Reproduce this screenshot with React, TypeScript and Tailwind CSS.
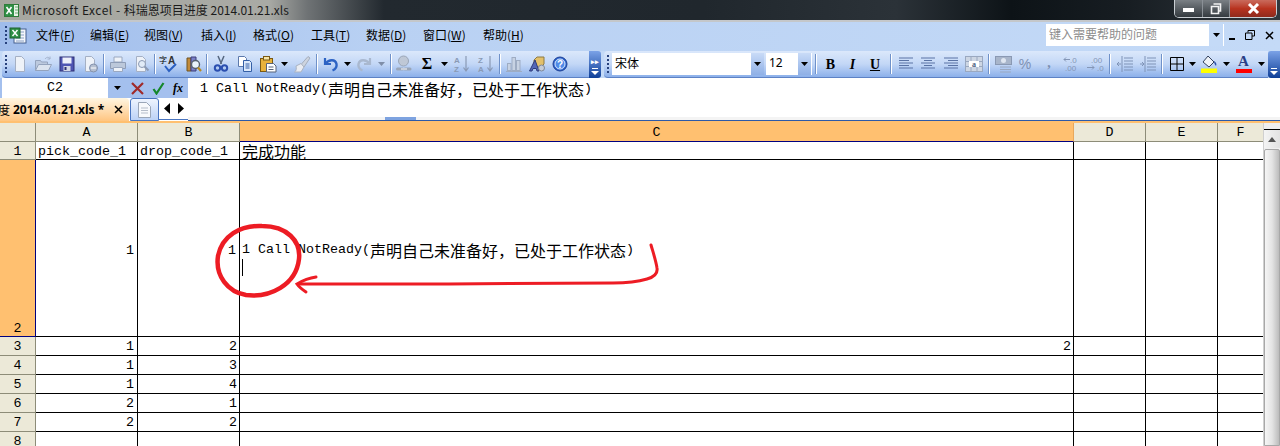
import React from "react";

const MONO = "font-['Liberation_Mono','Noto_Sans_CJK_SC',monospace]";
const UI = "font-['Noto_Sans_CJK_SC','Noto_Sans',sans-serif]";

const S = ({ c, children }: { c: string; children?: React.ReactNode }) => (
  <div className={`flex-none h-full flex items-center justify-center ${c}`}>{children}</div>
);
const Sep = ({ c }: { c: string }) => (
  <S c={c}>
    <div className="w-px h-[20px] bg-[#6f91c9] border-r border-white box-content" />
  </S>
);
const Ico = ({ children, s = 18 }: { children: React.ReactNode; s?: number }) => (
  <svg width={s} height={s} viewBox="0 0 18 18">{children}</svg>
);
const Drop = ({ dim }: { dim?: boolean }) => (
  <svg width="7" height="4" viewBox="0 0 7 4"><path d="M0 0h7L3.5 4z" fill={dim ? "#7f8ea8" : "#000"} /></svg>
);
const Grip = () => (
  <div className="flex flex-col gap-[2px]">
    {[0, 1, 2, 3, 4].map((i) => <div key={i} className="w-[2px] h-[2px] bg-[#27417c]" />)}
  </div>
);
const Chev = ({ c, top }: { c: string; top?: boolean }) => (
  <div className={`flex-none flex flex-col items-center justify-end pb-[3px] gap-[3px] bg-gradient-to-b from-[#7ba2e7] to-[#0e3f98] ${c}`}>
    {top && <div className="text-white text-[7px] leading-[7px] font-bold">▸▸</div>}
    <svg width="8" height="7" viewBox="0 0 8 7"><path d="M1 0h6v1H1zM0 3h8L4 7z" fill="#fff" /></svg>
  </div>
);
const MenuItem = ({ c, t, k }: { c: string; t: string; k: string }) => (
  <div className={`flex-none text-[12px] text-black pb-[3px] ${UI} ${c}`}>{t}(<u>{k}</u>)</div>
);

const TitleBar = () => (
  <div className="h-[22px] flex-none flex items-start border-b-2 border-[#c4c7ca] bg-[linear-gradient(90deg,#a6a79f_0%,#a9aaa5_21%,#6f7375_24%,#22292f_30%,#20272d_55%,#2b3238_70%,#0d1317_79%,#171d22_88%,#31383e_100%)]">
    <div className="w-[22px] h-[20px] flex items-center justify-center flex-none">
      <svg width="15" height="15" viewBox="0 0 15 15">
        <rect x="0.5" y="1.5" width="14" height="12" fill="#e8f3e6" stroke="#2f7d3a" />
        <rect x="1" y="2" width="9" height="11" fill="#2f8f45" />
        <path d="M2.5 4l5 7M7.5 4l-5 7" stroke="#fff" strokeWidth="1.6" />
        <path d="M11 4h3M11 7h3M11 10h3" stroke="#6aa873" />
      </svg>
    </div>
    <div className={`h-[20px] flex items-center text-[12px] text-[#1b1b1b] whitespace-pre ${UI}`}><span className="tracking-[0.5px]">Microsoft Excel - </span>科瑞恩项目进度 2014.01.21.xls</div>
    <div className="ml-auto mr-[3px] h-[18px] w-[103px] flex rounded-b-[5px] border border-t-0 border-[#c9ced3] overflow-hidden">
      <div className="w-[28px] border-r border-[#8a9096] bg-gradient-to-b from-[#7a8085] to-[#353b40] flex items-center justify-center">
        <div className="w-[11px] h-[4px] bg-white mt-[3px]" />
      </div>
      <div className="w-[27px] border-r border-[#8a9096] bg-gradient-to-b from-[#7a8085] to-[#353b40] flex items-center justify-center">
        <svg width="12" height="12" viewBox="0 0 12 12"><path d="M3.5 1h7v7h-2M1.5 3.5h7v7h-7z" fill="none" stroke="#f2f2f2" strokeWidth="1.6" /></svg>
      </div>
      <div className="flex-1 bg-gradient-to-b from-[#c96a5c] via-[#b8331f] to-[#8f2a1c] flex items-center justify-center">
        <svg width="13" height="11" viewBox="0 0 13 11"><path d="M2 1l9 9M11 1l-9 9" stroke="#fff" strokeWidth="3" /></svg>
      </div>
    </div>
  </div>
);

const MenuBar = () => (
  <div className="h-[29px] flex-none flex items-center bg-[linear-gradient(90deg,#9fbceb_0%,#b9d1f3_30%,#c4daf7_100%)]">
    <div className="w-[36px] flex-none flex items-center pl-[5px] pb-[3px] gap-[2px] h-full">
      <Grip />
      <svg width="18" height="17" viewBox="0 0 18 17">
        <rect x="5" y="2" width="12" height="14" fill="#f4f7fb" stroke="#46608f" />
        <path d="M7 5h8M7 8h8M7 11h8M7 14h8" stroke="#8aa1c6" />
        <rect x="1" y="1" width="10" height="10" fill="#2f8f45" stroke="#1d6330" />
        <path d="M3.5 3l5 6M8.5 3l-5 6" stroke="#fff" strokeWidth="1.4" />
      </svg>
    </div>
    <MenuItem c="w-[54px]" t="文件" k="F" />
    <MenuItem c="w-[54px]" t="编辑" k="E" />
    <MenuItem c="w-[57px]" t="视图" k="V" />
    <MenuItem c="w-[52px]" t="插入" k="I" />
    <MenuItem c="w-[58px]" t="格式" k="O" />
    <MenuItem c="w-[55px]" t="工具" k="T" />
    <MenuItem c="w-[57px]" t="数据" k="D" />
    <MenuItem c="w-[60px]" t="窗口" k="W" />
    <MenuItem c="w-[50px]" t="帮助" k="H" />
    <div className="ml-auto w-[178px] h-[22px] mb-[3px] flex bg-white">
      <div className={`flex-1 pl-[3px] pb-[2px] flex items-center text-[12px] text-[#8d8d8d] ${UI}`}>键入需要帮助的问题</div>
      <div className="w-[14px] bg-[#c4daf7] flex items-center justify-center"><Drop /></div>
      <div className="w-px" />
    </div>
    <S c="w-[16px]"><div className="w-[6px] h-[2px] bg-black mt-[4px]" /></S>
    <S c="w-[19px] pb-[3px]">
      <svg width="10" height="10" viewBox="0 0 10 10"><path d="M3 2.5V.5h6.5V6H7M.5 3H7v6.500H.5z" fill="none" stroke="#000" /></svg>
    </S>
    <S c="w-[20px] pb-[3px]">
      <svg width="9" height="9" viewBox="0 0 9 9"><path d="M1 1l7 7M8 1L1 8" stroke="#000" strokeWidth="1.5" /></svg>
    </S>
    <div className="w-px" />
  </div>
);

const Doc = () => <path d="M4.5 1.500h6l3 3v12h-9z" fill="#eef2f8" stroke="#a5b0c4" />;

const ToolbarA = () => (
  <div className="w-[587px] flex-none h-full flex items-center rounded-l-[4px] pl-0">
    <S c="w-[7px]"><Grip /></S>
    <S c="w-[22px]"><Ico><Doc /></Ico></S>
    <S c="w-[24px]"><Ico><path d="M1.500 15.500v-10h5l1 1.500h6v8.500z" fill="#bcc9de" stroke="#94a3bd" /><path d="M1.500 15.500l3-6h13l-3 6z" fill="#dbe3ef" stroke="#94a3bd" /><path d="M11 4c2-2.500 4-2 5 0M16 1.500V4h-2.500" fill="none" stroke="#a3b2cc" /></Ico></S>
    <S c="w-[23px]"><Ico><rect x="2" y="2" width="14" height="14" fill="#4f55b3" stroke="#2f3174" /><rect x="4.5" y="2.5" width="9" height="6" fill="#eef0fa" /><rect x="5.5" y="11" width="7" height="5" fill="#d5d8e6" /><rect x="6.5" y="12" width="2" height="3" fill="#2f3174" /></Ico></S>
    <S c="w-[24px]"><Ico><Doc /><circle cx="12.5" cy="13" r="4" fill="#b5bfd0" stroke="#8291ad" /><path d="M10 13h5" stroke="#fff" /></Ico></S>
    <Sep c="w-[4px]" />
    <S c="w-[23px]"><Ico><path d="M5 2h8v5H5z" fill="#eef2f8" stroke="#9aa8c0" /><path d="M1.500 7.500h15v6h-15z" fill="#bcc8da" stroke="#8e9db7" /><path d="M4.500 12.500h9v4h-9z" fill="#eef2f8" stroke="#9aa8c0" /></Ico></S>
    <S c="w-[24px]"><Ico><Doc /><circle cx="10" cy="9" r="3.5" fill="#e1ebf7" stroke="#8b9ab4" /><path d="M12.500 11.500l4 4" stroke="#8b9ab4" strokeWidth="2" /></Ico></S>
    <Sep c="w-[4px]" />
    <S c="w-[23px]"><svg width="20" height="18" viewBox="0 0 20 18"><text x="0" y="8" fontSize="8" fill="#000" fontFamily="Noto Sans CJK SC">字</text><text x="9" y="9" fontSize="10" fontWeight="700" fill="#333" fontFamily="Liberation Sans">A</text><path d="M6 11l4 5 7-7" fill="none" stroke="#2a5fc1" strokeWidth="2" /></svg></S>
    <S c="w-[25px]"><Ico><path d="M3 3h4v13H3z" fill="#c28a3a" stroke="#6e5220" /><path d="M7 2h5v14H7z" fill="#7a80c8" stroke="#3c3f7a" /><circle cx="11.5" cy="9.5" r="4" fill="#e9f3fb" stroke="#55606e" strokeWidth="1.4" /><path d="M14 12.500l3 3.500" stroke="#b98a1c" strokeWidth="2.2" /></Ico></S>
    <Sep c="w-[4px]" />
    <S c="w-[24px]"><Ico><path d="M6 1l3.500 8M12 1L8.500 9" stroke="#56677f" strokeWidth="1.5" /><circle cx="5.5" cy="13" r="2.7" fill="none" stroke="#2b4fb0" strokeWidth="2" /><circle cx="12.5" cy="13" r="2.7" fill="none" stroke="#2b4fb0" strokeWidth="2" /></Ico></S>
    <S c="w-[24px]"><Ico><path d="M2.500 1.500h6l2 2v8h-8z" fill="#fff" stroke="#5c79ac" /><path d="M7.500 5.500h6l2 2v9h-8z" fill="#dce9fb" stroke="#345fa6" /><path d="M9.500 9h4M9.500 11h4M9.500 13h4" stroke="#345fa6" /></Ico></S>
    <S c="w-[22px]"><Ico><rect x="1.5" y="3.5" width="12" height="13" fill="#e8b23c" stroke="#7a5a14" /><rect x="4.5" y="1.5" width="6" height="3.5" fill="#f7e6a6" stroke="#7a5a14" /><path d="M7.500 8.500h7l2.500 2.500v6h-9.500z" fill="#fff" stroke="#56627a" /><path d="M9.500 12h5M9.500 14.500h5" stroke="#56627a" /></Ico></S>
    <S c="w-[11px]"><Drop /></S>
    <S c="w-[24px]"><Ico><path d="M8 9.500l7-8 2 1.500-6 9z" fill="#cdd4df" stroke="#a4aebe" /><path d="M3 11l5-2.500 3 3.500-3 5H1.500c2-1 2-3.500 1.500-6z" fill="#e9ecf2" stroke="#aab3c2" /></Ico></S>
    <Sep c="w-[5px]" />
    <S c="w-[24px]"><Ico><path d="M3 3v6h6" fill="none" stroke="#2d63c4" strokeWidth="2.2" /><path d="M3.500 8.500C7 4 13.500 4 14.500 9c.5 3-1.500 5.500-4 6.500" fill="none" stroke="#2d63c4" strokeWidth="2.4" /></Ico></S>
    <S c="w-[9px]"><Drop /></S>
    <S c="w-[24px]"><Ico><path d="M15 3v6H9" fill="none" stroke="#a9b8cf" strokeWidth="2.2" /><path d="M14.500 8.500C11 4 4.500 4 3.500 9c-.5 3 1.500 5.500 4 6.500" fill="none" stroke="#a9b8cf" strokeWidth="2.4" /></Ico></S>
    <S c="w-[11px]"><Drop dim /></S>
    <Sep c="w-[7px]" />
    <S c="w-[20px]"><Ico><circle cx="8.5" cy="6" r="5" fill="#bfc8d6" stroke="#9aa6b8" /><path d="M2.500 14h5M10 14h5" stroke="#9aa6b8" strokeWidth="3" strokeLinecap="round" fill="none" /><path d="M6 14h6" stroke="#d8dde6" strokeWidth="1.5" /></Ico></S>
    <S c="w-[26px]"><span className="text-[16px] font-bold text-black font-['Liberation_Serif',serif] leading-none">Σ</span></S>
    <S c="w-[9px]"><Drop /></S>
    <S c="w-[25px]"><svg width="18" height="18" viewBox="0 0 18 18"><text x="1" y="8" fontSize="8" fill="#8a9ab5" fontWeight="700" fontFamily="Liberation Sans">A</text><text x="1" y="16.5" fontSize="8" fill="#8a9ab5" fontWeight="700" fontFamily="Liberation Sans">Z</text><path d="M13 1v14M10.500 12.500l2.500 3.500 2.500-3.500" fill="none" stroke="#8a9ab5" strokeWidth="1.2" /></svg></S>
    <S c="w-[23px]"><svg width="18" height="18" viewBox="0 0 18 18"><text x="1" y="8" fontSize="8" fill="#8a9ab5" fontWeight="700" fontFamily="Liberation Sans">Z</text><text x="1" y="16.5" fontSize="8" fill="#8a9ab5" fontWeight="700" fontFamily="Liberation Sans">A</text><path d="M13 1v14M10.500 12.500l2.500 3.500 2.500-3.500" fill="none" stroke="#8a9ab5" strokeWidth="1.2" /></svg></S>
    <Sep c="w-[6px]" />
    <S c="w-[22px]"><Ico><rect x="2.5" y="8.5" width="3.5" height="7" fill="#c7d2e3" stroke="#9eacc3" /><rect x="7" y="2.5" width="3.5" height="13" fill="#c7d2e3" stroke="#9eacc3" /><rect x="11.5" y="5.5" width="3.5" height="10" fill="#c7d2e3" stroke="#9eacc3" /><path d="M1 16.500h16" stroke="#9eacc3" /></Ico></S>
    <S c="w-[24px]"><Ico><path d="M9 2h7v7l-3 3H6V5z" fill="#e3c06a" stroke="#8d7a45" /><path d="M1.500 16L7 5l4 11H9l-.7-2.500H5L4 16z" fill="#5266b8" stroke="#2e3a7a" /><circle cx="13.5" cy="13" r="3" fill="#c5ccd8" stroke="#7d8798" /></Ico></S>
    <S c="w-[22px]"><svg width="16" height="16" viewBox="0 0 16 16"><circle cx="8" cy="8" r="7" fill="#2e66d0" stroke="#1c3f94" /><circle cx="8" cy="8" r="5" fill="#4f8be8" stroke="#dfeafb" /><text x="8" y="11.5" textAnchor="middle" fontSize="10" fontWeight="700" fill="#fff" fontFamily="Liberation Sans">?</text></svg></S>
    <div className="flex-1" />
  </div>
);

const AlignIcon = ({ kind }: { kind: "l" | "c" | "r" }) => {
  const rows = [0, 1, 2, 3, 4];
  const path = rows
    .map((i) => {
      const short = i % 2 === 1;
      if (kind === "l") return `M2 ${3 + i * 2.5}H${short ? 12 : 16}`;
      if (kind === "r") return `M${short ? 6 : 2} ${3 + i * 2.5}H16`;
      return `M${short ? 5 : 2} ${3 + i * 2.5}H${short ? 13 : 16}`;
    })
    .join("");
  return <Ico><path d={path} stroke="#5a73a5" fill="none" /></Ico>;
};

const ToolbarB = () => (
  <div className="flex-1 h-full flex items-center rounded-l-[4px]">
    <S c="w-[8px]"><Grip /></S>
    <div className="w-[152px] flex-none h-[22px] flex bg-white">
      <div className={`flex-1 pl-[3px] pb-[2px] text-[12px] text-black flex items-center ${UI}`}>宋体</div>
      <div className="w-[13px] bg-gradient-to-b from-[#c9dbf7] to-[#8fb0e6] flex items-center justify-center"><Drop /></div>
    </div>
    <div className="w-[2px] flex-none" />
    <div className="w-[46px] flex-none h-[22px] flex bg-white">
      <div className="flex-1 pl-[3px] pb-[2px] text-[12px] text-black flex items-center font-['Noto_Sans',sans-serif]">12</div>
      <div className="w-[13px] bg-gradient-to-b from-[#c9dbf7] to-[#8fb0e6] flex items-center justify-center"><Drop /></div>
      <div className="w-px" />
    </div>
    <Sep c="w-[8px]" />
    <S c="w-[21px]"><span className="font-['Liberation_Serif',serif] font-bold text-[14px] text-black">B</span></S>
    <S c="w-[23px]"><span className="font-['Liberation_Serif',serif] font-bold italic text-[14px] text-black">I</span></S>
    <S c="w-[22px]"><span className="font-['Liberation_Serif',serif] font-bold underline text-[14px] text-black">U</span></S>
    <Sep c="w-[10px]" />
    <S c="w-[20px]"><AlignIcon kind="l" /></S>
    <S c="w-[24px]"><AlignIcon kind="c" /></S>
    <S c="w-[22px]"><AlignIcon kind="r" /></S>
    <S c="w-[23px]"><svg width="18" height="16" viewBox="0 0 18 16"><rect x="0.5" y="0.5" width="17" height="15" fill="#cdd6e4" stroke="#9aa8c0" /><path d="M.5 5.500h17M.5 10.500h17M6 .5v5M12 .5v5M6 10.500v5M12 10.500v5" stroke="#9aa8c0" /><rect x="4" y="5" width="10" height="6" fill="#fff" /><text x="9" y="10.5" textAnchor="middle" fontSize="8" fontWeight="700" fill="#4d5f80" fontFamily="Liberation Serif">a</text></svg></S>
    <Sep c="w-[8px]" />
    <S c="w-[20px]"><svg width="17" height="17" viewBox="0 0 17 17"><rect x="0.5" y="0.5" width="16" height="8" fill="#a8b5ca" stroke="#8a99b3" /><circle cx="8.5" cy="4.5" r="2.5" fill="#dfe6f0" /><path d="M5 11h11M5 13.500h11M5 16h11" stroke="#9aa8c0" /></svg></S>
    <S c="w-[24px]"><span className="text-[14px] text-[#7d90b2] font-['Liberation_Sans',sans-serif]">%</span></S>
    <S c="w-[24px]"><span className="text-[14px] font-bold text-[#7d90b2] font-['Liberation_Serif',serif] -mt-[4px]">,</span></S>
    <S c="w-[23px]"><svg width="20" height="16" viewBox="0 0 20 16"><text x="7" y="7" fontSize="8" fill="#8496b6" fontFamily="Liberation Sans">.0</text><text x="2" y="15" fontSize="8" fill="#8496b6" fontFamily="Liberation Sans">.00</text><path d="M7 3.500H1M3 1.500l-2 2 2 2" fill="none" stroke="#8496b6" /></svg></S>
    <S c="w-[23px]"><svg width="20" height="16" viewBox="0 0 20 16"><text x="5" y="7" fontSize="8" fill="#8496b6" fontFamily="Liberation Sans">.00</text><text x="11" y="15" fontSize="8" fill="#8496b6" fontFamily="Liberation Sans">.0</text><path d="M1 11.500h7M6 9.500l2 2-2 2" fill="none" stroke="#8496b6" /></svg></S>
    <Sep c="w-[6px]" />
    <S c="w-[23px]"><Ico><path d="M8 3h9M8 6h9M8 9h9M8 12h9M8 15h9M6 1v16" stroke="#7f93b7" fill="none" /><path d="M5 9H1M3 7L1 9l2 2" stroke="#7f93b7" fill="none" /></Ico></S>
    <S c="w-[24px]"><Ico><path d="M8 3h9M8 6h9M8 9h9M8 12h9M8 15h9M6 1v16" stroke="#7f93b7" fill="none" /><path d="M1 9h4M3 7l2 2-2 2" stroke="#7f93b7" fill="none" /></Ico></S>
    <Sep c="w-[4px]" />
    <S c="w-[25px]"><svg width="14" height="14" viewBox="0 0 14 14"><path d="M.5.500h13v13H.5zM7 .5v13M.5 7h13" fill="none" stroke="#000" /></svg></S>
    <S c="w-[7px]"><Drop /></S>
    <S c="w-[27px]">
      <svg width="17" height="18" viewBox="0 0 17 18"><path d="M7 1l6 6-5 5-6-5z" fill="#eef2f8" stroke="#33415c" /><path d="M13 6c2 1 3 3 2 5-1-1-2-3-2-5z" fill="#2a4fa8" /><rect x="0" y="13.5" width="16" height="4.5" fill="#ffff00" /></svg>
    </S>
    <S c="w-[7px]"><Drop /></S>
    <S c="w-[27px]">
      <div className="flex flex-col items-center">
        <span className="text-[15px] leading-[13px] font-bold text-[#2a3f86] font-['Liberation_Serif',serif]">A</span>
        <div className="w-[16px] h-[4px] bg-[#ff0000] mt-[1px]" />
      </div>
    </S>
    <S c="w-[8px]"><Drop /></S>
    <div className="flex-1" />
  </div>
);

const Toolbars = () => (
  <div className="h-[27px] flex-none flex bg-[#c4daf7]">
    <div className="w-[2px] flex-none" />
    <div className="w-[587px] flex-none h-full rounded-l-[4px] border-b border-[#5d82c5] bg-gradient-to-b from-[#dbe8fb] via-[#c3d7f6] to-[#8cb0ea]"><ToolbarA /></div>
    <Chev c="w-[12px] rounded-r-[3px] h-full" top />
    <div className="w-[3px] flex-none" />
    <div className="flex-1 h-full rounded-l-[4px] border-b border-[#5d82c5] bg-gradient-to-b from-[#dbe8fb] via-[#c3d7f6] to-[#8cb0ea] flex"><ToolbarB /></div>
    <Chev c="w-[12px] rounded-l-[3px] h-full" />
  </div>
);

const Cjk = ({ children }: { children: React.ReactNode }) => (
  <span className="text-[16px] font-['Noto_Sans_CJK_SC',sans-serif]">{children}</span>
);
const Mono = ({ children, c = "" }: { children: React.ReactNode; c?: string }) => (
  <span className={`text-[13.33px] text-black ${MONO} ${c}`}>{children}</span>
);

const CallText = () => (
  <div className={`h-[18px] flex items-center whitespace-nowrap text-[13.33px] text-black ${MONO}`}>
    <span className="whitespace-pre">1 Call NotReady(</span><Cjk>{"声明自己未准备好\uFF0C已处于工作状态"}</Cjk>)
  </div>
);

const FormulaArea = () => (
  <div className="h-[43px] flex-none flex">
    <div className="w-[188px] flex-none flex flex-col">
      <div className="h-[20px] flex-none flex items-center bg-[#a4c0ee]">
        <div className="w-[2px]" />
        <div className="w-[106px] h-full bg-white flex items-center justify-center"><Mono>C2</Mono></div>
        <S c="w-[18px]"><Drop /></S>
        <S c="w-[22px]"><svg width="13" height="13" viewBox="0 0 13 13"><path d="M1 1l11 11M12 1L1 12" stroke="#a02a2a" strokeWidth="2.2" /></svg></S>
        <S c="w-[20px]"><svg width="13" height="13" viewBox="0 0 13 13"><path d="M1.500 7l3 4.500L11.500 1" fill="none" stroke="#15872a" strokeWidth="2.2" /></svg></S>
        <S c="w-[20px]"><span className="font-['Liberation_Serif',serif] italic font-bold text-[12px] text-black">fx</span></S>
      </div>
      <div className="flex-1 flex items-start bg-white">
        <div className="w-[129px] h-[23px] flex-none rounded-tr-[4px] overflow-hidden flex items-center bg-gradient-to-b from-[#fff6e2] to-[#ffc580] whitespace-nowrap">
          <span className={`-ml-[2px] text-[12px] w-[15px] flex-none text-black ${UI}`}>度</span>
          <span className="text-[12px] font-bold text-black font-['Noto_Sans',sans-serif] w-[96px] flex-none">2014.01.21.xls *</span>
          <svg width="9" height="9" viewBox="0 0 9 9" className="ml-[5px]"><path d="M1 1l7 7M8 1L1 8" stroke="#000" strokeWidth="1.5" /></svg>
        </div>
        <div className="w-px flex-none" />
        <div className="w-[29px] h-[23px] flex-none rounded-t-[3px] border border-[#4a75c0] bg-gradient-to-b from-[#eef4fe] to-[#bcd2f6] flex items-center justify-center">
          <svg width="13" height="16" viewBox="0 0 13 16"><path d="M.5.500h8l4 4v11H.5z" fill="#f7f9fc" stroke="#9aa6b8" /><path d="M3 6h7M3 8.500h7M3 11h7" stroke="#b5bdca" /></svg>
        </div>
        <div className="flex-1 h-[22px] flex items-center justify-center gap-[6px] border-b border-[#4a75c0] text-black">
          <svg width="8" height="11" viewBox="0 0 8 11"><path d="M7 0v11L1 5.500z" /></svg>
          <svg width="8" height="11" viewBox="0 0 8 11"><path d="M1 0v11l6-5.500z" /></svg>
        </div>
      </div>
    </div>
    <div className="flex-1 flex flex-col bg-white border-b border-[#2d5aa8]">
      <div className="h-[22px] pl-[12px] flex items-center"><CallText /></div>
      <div className="flex-1" />
      <div className="h-[3px] flex bg-[#f4f4f4]">
        <div className="w-[197px]" />
        <div className="w-[31px] bg-[#7ea3e0]" />
      </div>
    </div>
  </div>
);

const HEAD = "border-r border-b border-[#8d8c78] bg-[#ece9d8] flex items-center justify-center text-[13.33px] text-black";
const CELL = "border-r border-b border-black bg-white flex text-[13.33px] text-black overflow-visible whitespace-nowrap";

const Num = ({ r, v }: { r: number; v: [string, string] }) => (
  <>
    <div className={`${HEAD} ${MONO} pt-[2px]`}>{r}</div>
    <div className={`${CELL} ${MONO} items-center justify-end pr-[3px] pt-[2px]`}>{v[0]}</div>
    <div className={`${CELL} ${MONO} items-center justify-end pr-[2px] pt-[2px]`}>{v[1]}</div>
    <div className={`${CELL} ${MONO} items-center justify-end pr-[2px] pt-[2px]`}>{r === 3 ? "2" : ""}</div>
    <div className={CELL} />
    <div className={CELL} />
    <div className="border-b border-black bg-white" />
  </>
);

const Sheet = () => (
  <div className="h-[323px] flex-none flex">
    <div className="w-[1263px] flex-none grid grid-cols-[36px_102px_102px_834px_72px_72px_45px] grid-rows-[19px_18px_177px_19px_19px_19px_19px_19px_19px]">
      <div className={HEAD} />
      <div className={`${HEAD} ${MONO} pt-[2px]`}>A</div>
      <div className={`${HEAD} ${MONO} pt-[2px]`}>B</div>
      <div className={`border-r border-b border-b-[#000080] border-r-[#e8a85c] bg-[#ffc070] flex items-center justify-center pt-[2px] text-[13.33px] text-black ${MONO}`}>C</div>
      <div className={`${HEAD} ${MONO} pt-[2px]`}>D</div>
      <div className={`${HEAD} ${MONO} pt-[2px]`}>E</div>
      <div className={`border-b border-[#8d8c78] bg-[#ece9d8] flex items-center justify-center pt-[2px] text-[13.33px] text-black ${MONO}`}>F</div>

      <div className={`${HEAD} ${MONO} pt-[3px]`}>1</div>
      <div className={`${CELL} ${MONO} items-center pl-[2px] pt-[3px]`}>pick_code_1</div>
      <div className={`${CELL} ${MONO} items-center pl-[2px] pt-[3px]`}>drop_code_1</div>
      <div className={`${CELL} items-center pl-[2px] pt-[1px]`}><Cjk>完成功能</Cjk></div>
      <div className={CELL} />
      <div className={CELL} />
      <div className="border-b border-black bg-white" />

      <div className={`border-r border-b border-r-[#000080] border-b-[#000080] bg-[#ffc070] flex items-end justify-center leading-[14px] text-[13.33px] text-black ${MONO}`}>2</div>
      <div className={`${CELL} ${MONO} items-center justify-end pr-[3px] pt-[6px]`}>1</div>
      <div className={`${CELL} ${MONO} items-center justify-end pr-[3px] pt-[6px]`}>1</div>
      <div className={`${CELL} flex-col pl-[2px] pt-[81px]`}>
        <CallText />
        <div className="w-px h-[17px] bg-black" />
      </div>
      <div className={CELL} />
      <div className={CELL} />
      <div className="border-b border-black bg-white" />

      <Num r={3} v={["1", "2"]} />
      <Num r={4} v={["1", "3"]} />
      <Num r={5} v={["1", "4"]} />
      <Num r={6} v={["2", "1"]} />
      <Num r={7} v={["2", "2"]} />
      <Num r={8} v={["", ""]} />
    </div>
    <div className="flex-1 flex flex-col bg-[#f0f0f0] border-l border-[#d0d0d0]">
      <div className="h-[7px] flex-none border-b border-black bg-[#eeeeee]" />
      <div className="h-[18px] flex-none bg-gradient-to-r from-[#f4f4f4] to-[#e2e2e2] flex items-center justify-center">
        <svg width="8" height="5" viewBox="0 0 8 5"><path d="M4 0l4 5H0z" fill="#555" /></svg>
      </div>
      <div className="h-px flex-none" />
      <div className="flex-1 border border-[#a8a8a8] rounded-t-[2px] bg-gradient-to-r from-[#f5f5f5] via-[#e4e4e4] to-[#bcbcbc]" />
    </div>
  </div>
);

export default function App() {
  return (
    <div className="relative w-[1280px] h-[446px] overflow-hidden flex flex-col bg-white">
      <TitleBar />
      <MenuBar />
      <Toolbars />
      <FormulaArea />
      <div className="h-[2px] flex-none bg-[#ffc070]" />
      <Sheet />
      <svg className="absolute top-0 left-0 pointer-events-none" width="1280" height="446" viewBox="0 0 1280 446">
        <path d="M262 226c-22-1-40 10-44 30-3 20 10 36 28 39 24 3 50-10 53-36 2-18-12-33-37-33z" fill="none" stroke="#ed1c24" strokeWidth="4.5" />
        <path d="M651 245c2 7 5 16 6 23 1 6-3 9-10 11-10 3-20 4-34 4-90 1-220 1-314 1" fill="none" stroke="#ed1c24" strokeWidth="3" strokeLinecap="round" />
        <path d="M316 277c-7 1-14 4-19 7 2 3 6 6 9 8" fill="none" stroke="#ed1c24" strokeWidth="3" strokeLinecap="round" />
      </svg>
    </div>
  );
}
